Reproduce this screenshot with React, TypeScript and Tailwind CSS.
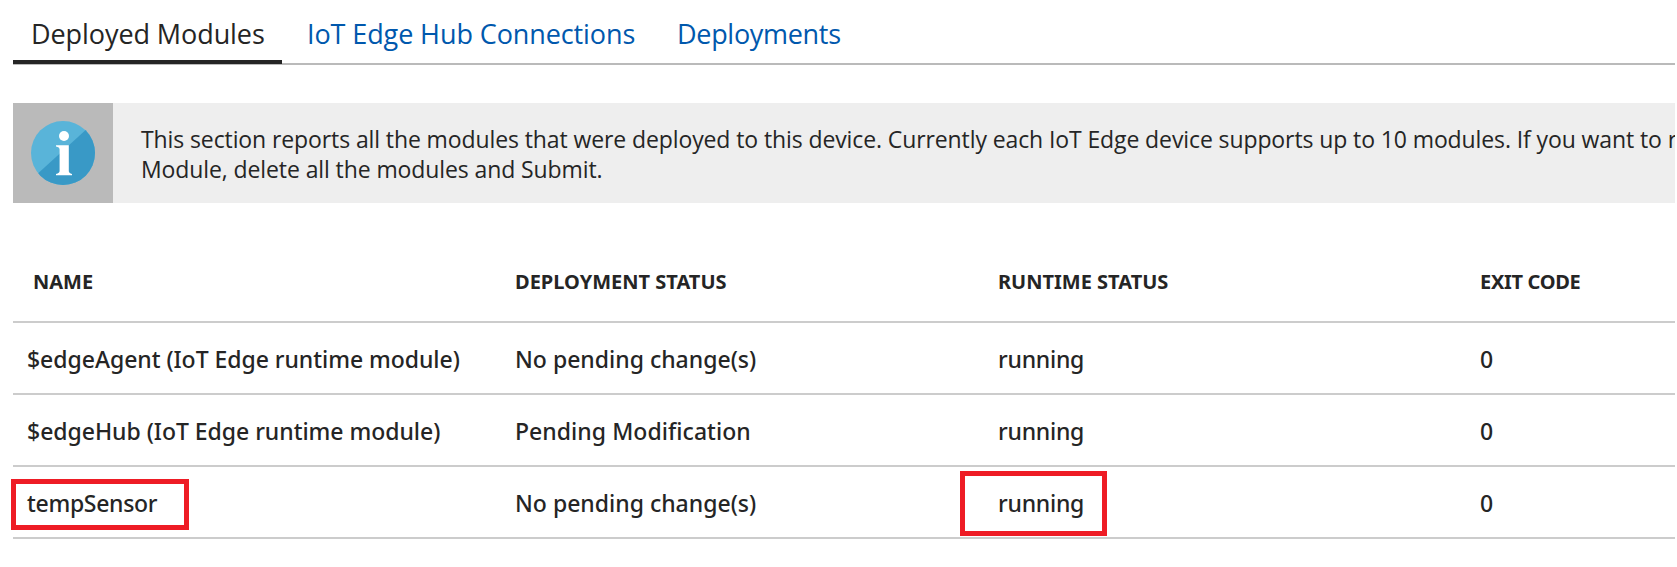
type Row = {
  name: string;
  nameSpacing: string;
  status: string;
  statusSpacing: string;
  highlighted?: boolean;
};

const rows: Row[] = [
  {
    name: "$edgeAgent (IoT Edge runtime module)",
    nameSpacing: "tracking-[-0.04px]",
    status: "No pending change(s)",
    statusSpacing: "tracking-[0px]",
  },
  {
    name: "$edgeHub (IoT Edge runtime module)",
    nameSpacing: "tracking-[-0.03px]",
    status: "Pending Modification",
    statusSpacing: "tracking-[0.05px]",
  },
  {
    name: "tempSensor",
    nameSpacing: "tracking-[-0.3px]",
    status: "No pending change(s)",
    statusSpacing: "tracking-[0px]",
    highlighted: true,
  },
];

const columns = "grid grid-cols-[501px_483px_483px_195px] border-b-2 border-[#cccccc]";

function InfoIcon() {
  return (
    <svg width="64" height="64" viewBox="0 0 64 64">
      <clipPath id="disc">
        <circle cx="32" cy="32" r="32" />
      </clipPath>
      <circle cx="32" cy="32" r="32" fill="#59b4d9" />
      <path d="M64 0.4 L0 58.7 V64 H64 Z" fill="#3999c6" clipPath="url(#disc)" />
      <circle cx="33" cy="15" r="5" fill="#fff" />
      <path
        d="M25 24.2 H37.8 V50 Q37.8 52 41 52.9 V54.2 H25 V52.9 Q28.6 52 28.6 50 V28.5 Q28.6 26 25 25.4 Z"
        fill="#fff"
      />
    </svg>
  );
}

function Tabs() {
  return (
    <nav className="flex h-[65px] border-b-2 border-[#bababa] pt-[10px] text-[27px] leading-[47px] whitespace-nowrap text-[#0058ad]">
      <a className="relative w-[269px] pl-[18px] tracking-[-0.08px] text-[#252525]">
        Deployed Modules
        <span className="absolute right-0 bottom-[-1px] left-0 h-1 bg-[#252525]" />
      </a>
      <a className="w-[370px] pl-[25px] tracking-[-0.1px]">IoT Edge Hub Connections</a>
      <a className="pl-[25px] tracking-[-0.3px]">Deployments</a>
    </nav>
  );
}

export default function App() {
  return (
    <main className="h-[567px] w-[1677px] overflow-hidden bg-white pr-[2px] pl-[13px] font-['Open_Sans',sans-serif] text-[#252525]">
      <Tabs />

      <section className="mt-[38px] flex h-[100px] bg-[#eeeeee]">
        <div className="flex w-[100px] shrink-0 items-center justify-center bg-[#bababa]">
          <InfoIcon />
        </div>
        <div className="min-w-0 flex-1 overflow-hidden pt-[21px] pl-[28px] text-[23px] leading-[30px] whitespace-nowrap">
          <p className="tracking-[-0.105px]">
            This section reports all the modules that were deployed to this device. Currently each IoT Edge device supports up to 10 modules. If you want to r
          </p>
          <p className="tracking-[-0.1px]">Module, delete all the modules and Submit.</p>
        </div>
      </section>

      <section className="mt-[38px] font-['Noto_Sans',sans-serif] whitespace-nowrap">
        <div className={`${columns} h-[82px] items-center pt-[2px] text-[20px] font-bold`}>
          <div className="pl-[20px]">NAME</div>
          <div className="pl-[1px]">DEPLOYMENT STATUS</div>
          <div className="pl-[1px]">RUNTIME STATUS</div>
          <div className="tracking-[-0.3px]">EXIT CODE</div>
        </div>
        {rows.map((row) => (
          <div key={row.name} className={`${columns} h-[72px] items-center text-[23px] leading-[30px] font-medium`}>
            <div className="relative pt-[2px] pl-[14px]">
              <span className={row.nameSpacing}>{row.name}</span>
              {row.highlighted && (
                <div className="absolute top-[-7px] left-[-2px] h-[51px] w-[178px] border-5 border-[#ee1c25]" />
              )}
            </div>
            <div className="pt-[2px] pl-[1px]">
              <span className={row.statusSpacing}>{row.status}</span>
            </div>
            <div className="relative pt-[2px] pl-[1px] tracking-[-0.25px]">
              running
              {row.highlighted && (
                <div className="absolute top-[-15px] left-[-37px] h-[65px] w-[147px] border-5 border-[#ee1c25]" />
              )}
            </div>
            <div className="pt-[2px]">0</div>
          </div>
        ))}
      </section>
    </main>
  );
}
